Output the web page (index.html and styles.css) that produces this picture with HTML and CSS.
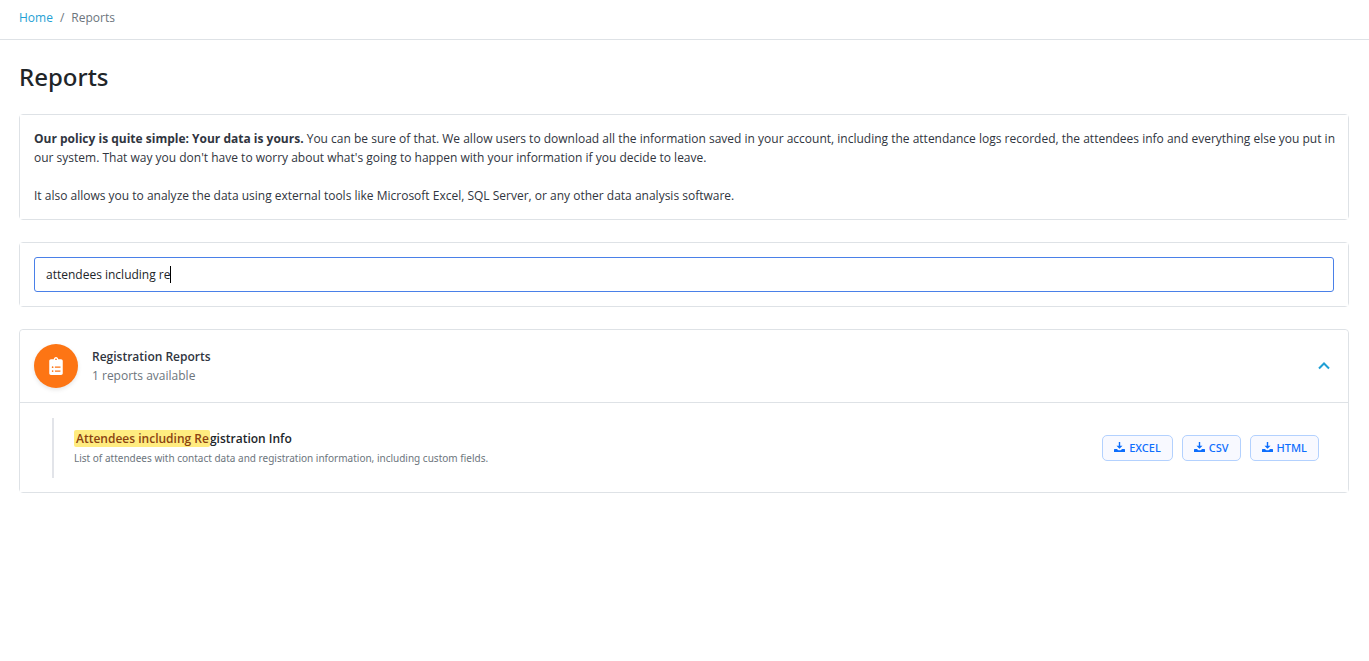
FILE: index.html
```html
<!DOCTYPE html>
<html lang="en">
<head>
    <meta charset="UTF-8">
    <meta name="viewport" content="width=device-width, initial-scale=1.0">
    <title>Reports</title>
    <link rel="stylesheet" href="styles.css">
</head>
<body>

    <!-- Icons shared by the buttons -->
    <svg class="sprite" aria-hidden="true">
        <symbol id="icon-download" viewBox="0 0 11 10">
            <path d="M4.8 0h1.4v3.8h2.3L5.5 6.8l-3-3h2.3z"/>
            <path d="M.5 7h2.3l1.6 1.2h2.2L8.2 7h2.3l.5.5V10H0V7.500z"/>
        </symbol>
    </svg>

    <nav class="topbar" aria-label="Breadcrumb">
        <ol class="breadcrumb">
            <li><a href="#">Home</a></li>
            <li>Reports</li>
        </ol>
    </nav>

    <main class="content">
        <h1>Reports</h1>

        <section class="card">
            <div class="card-body policy">
                <p><strong>Our policy is quite simple: Your data is yours.</strong> You can be sure of that. We allow users to download all the information saved in your account, including the attendance logs recorded, the attendees info and everything else you put in our system. That way you don't have to worry about what's going to happen with your information if you decide to leave.</p>
                <p>It also allows you to analyze the data using external tools like Microsoft Excel, SQL Server, or any other data analysis software.</p>
            </div>
        </section>

        <section class="card">
            <div class="card-body">
                <div class="search-box">
                    <input type="text" class="search" id="search" aria-label="Search reports" value="attendees including re" autocomplete="off" spellcheck="false">
                    <span class="caret"></span>
                </div>
            </div>
        </section>

        <section class="card">
            <button type="button" class="group-header" aria-expanded="true">
                <span class="group-icon">
                    <svg viewBox="0 0 384 512" aria-hidden="true">
                        <path fill-rule="evenodd" d="M336 64h-80c0-35-29-64-64-64s-64 29-64 64H48C21 64 0 85 0 112v352c0 27 21 48 48 48h288c27 0 48-21 48-48V112c0-27-21-48-48-48zM96 424a24 24 0 1 1 0-48 24 24 0 0 1 0 48zm0-112a24 24 0 1 1 0-48 24 24 0 0 1 0 48zm96-272a24 24 0 1 1 0 48 24 24 0 0 1 0-48zm128 368c0 4-4 8-8 8H168c-4 0-8-4-8-8v-16c0-4 4-8 8-8h144c4 0 8 4 8 8zm0-112c0 4-4 8-8 8H168c-4 0-8-4-8-8v-16c0-4 4-8 8-8h144c4 0 8 4 8 8z"/>
                    </svg>
                </span>
                <span class="group-text">
                    <span class="group-title">Registration Reports</span>
                    <span class="group-count">1 reports available</span>
                </span>
                <svg class="chevron" viewBox="0 0 12 8" aria-hidden="true"><path d="M1 6.500l5-5 5 5"/></svg>
            </button>

            <div class="group-body">
                <div class="report">
                    <div class="report-text">
                        <h2><mark>Attendees including Re</mark>gistration Info</h2>
                        <p>List of attendees with contact data and registration information, including custom fields.</p>
                    </div>
                    <div class="report-actions">
                        <button type="button" class="btn"><svg aria-hidden="true"><use href="#icon-download"/></svg>EXCEL</button>
                        <button type="button" class="btn"><svg aria-hidden="true"><use href="#icon-download"/></svg>CSV</button>
                        <button type="button" class="btn"><svg aria-hidden="true"><use href="#icon-download"/></svg>HTML</button>
                    </div>
                </div>
            </div>
        </section>
    </main>

</body>
</html>
```

FILE: styles.css
```css
:root {
    --border: #dee2e6;
    --text: #303540;
    --dark: #212529;
    --muted: #6c757d;
    --link: #1f9fd4;
    --primary: #0d6efd;
    --font-alt: "Segoe UI", "Noto Sans", "Open Sans", sans-serif;
}

* {
    box-sizing: border-box;
}

body {
    margin: 0;
    background: #fff;
    color: var(--text);
    font-family: "Segoe UI", "Open Sans", "Noto Sans", sans-serif;
    font-size: 12px;
    line-height: 19px;
}

h1, h2, p {
    margin: 0;
}

button, input {
    font: inherit;
}

.sprite {
    display: none;
}

/* Breadcrumb */
.topbar {
    padding: 8px 19px 12px;
    border-bottom: 1px solid var(--border);
}

.breadcrumb {
    display: flex;
    margin: 0;
    padding: 0;
    list-style: none;
    color: var(--muted);
}

.breadcrumb li + li::before {
    content: "/";
    padding: 0 7px;
}

.breadcrumb a {
    color: var(--link);
    text-decoration: none;
}

.content {
    display: flex;
    flex-direction: column;
    gap: 22px;
    padding: 22px 20px 22px 19px;
}

h1 {
    color: var(--dark);
    font-family: var(--font-alt);
    font-size: 24px;
    font-weight: 500;
    line-height: 30px;
}

/* Cards */
.card {
    border: 1px solid var(--border);
    border-radius: 4px;
}

.card-body {
    padding: 14px;
    background: #fff;
}

.policy {
    padding-right: 10px;
}

.policy p + p {
    margin-top: 19px;
}

.search-box {
    position: relative;
}

.search {
    display: block;
    width: 100%;
    height: 35px;
    padding: 0 11px;
    border: 1px solid #4a80e8;
    border-radius: 3px;
    outline: none;
    background: #fff;
    color: var(--dark);
}

.caret {
    position: absolute;
    top: 9px;
    left: 136px;
    width: 1px;
    height: 17px;
    background: #000;
}

/* Report group */
.group-header {
    display: flex;
    align-items: center;
    gap: 14px;
    width: 100%;
    padding: 14px 18px 14px 14px;
    border: none;
    border-bottom: 1px solid var(--border);
    border-radius: 4px 4px 0 0;
    background: #fff;
    color: var(--text);
    text-align: left;
    cursor: pointer;
}

.group-icon {
    display: flex;
    align-items: center;
    justify-content: center;
    width: 44px;
    height: 44px;
    border-radius: 50%;
    background: #fd7514;
    box-shadow: 0 2px 4px rgba(0, 0, 0, 0.1);
}

.group-icon svg {
    width: 14px;
    height: 18px;
    fill: #fff;
}

.group-text {
    display: flex;
    flex: 1;
    flex-direction: column;
}

.group-title {
    font-weight: 600;
}

.group-count {
    color: var(--muted);
}

.chevron {
    width: 12px;
    height: 8px;
    fill: none;
    stroke: var(--link);
    stroke-width: 2;
}

.group-body {
    padding: 15px 29px 14px 32px;
    background: #fff;
}

.report {
    display: flex;
    align-items: center;
    justify-content: space-between;
    gap: 20px;
    min-height: 60px;
    padding-left: 20px;
    border-left: 2px solid #e2e4e9;
}

.report h2 {
    color: var(--dark);
    font-size: 12px;
    font-weight: 600;
    line-height: 20px;
}

.report p {
    color: var(--muted);
    font-family: var(--font-alt);
    font-size: 10px;
}

mark {
    padding: 0 1px 0 2px;
    border-radius: 2px;
    background: #ffec80;
    color: #8a4210;
}

.report-actions {
    display: flex;
    gap: 9px;
}

.btn {
    display: flex;
    align-items: center;
    gap: 4px;
    height: 26px;
    padding: 0 11px 2px;
    border: 1px solid #b3d1fe;
    border-radius: 5px;
    background: #f8f9ff;
    color: var(--primary);
    font-family: var(--font-alt);
    font-size: 11px;
    font-weight: 500;
    cursor: pointer;
}

.btn svg {
    width: 11px;
    height: 10px;
    fill: currentColor;
}
```
